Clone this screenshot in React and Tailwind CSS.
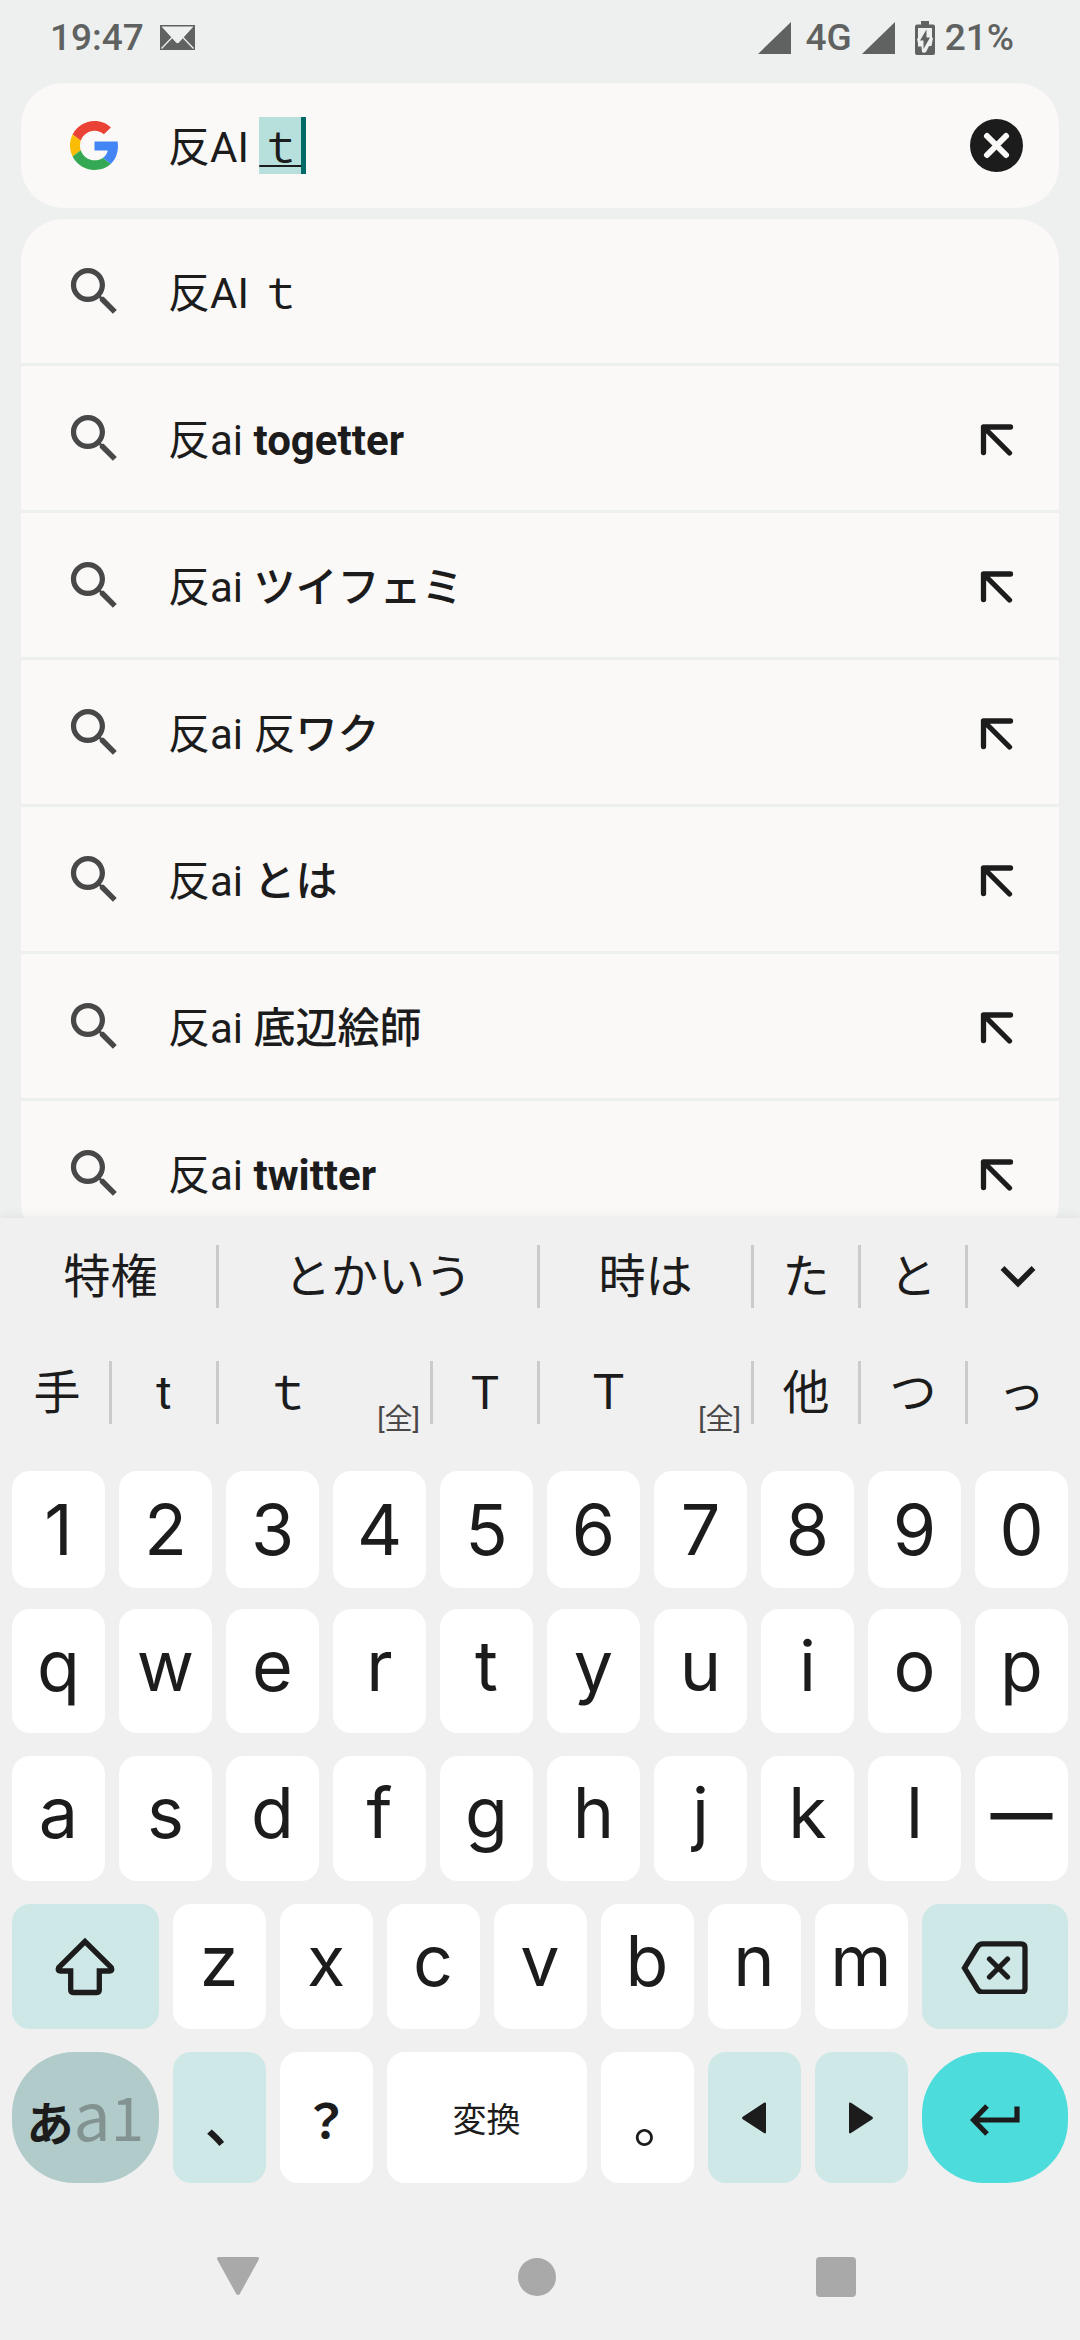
import React from 'react';

const suggestions = [
  { base: '反AI ｔ' },
  { base: '反ai ', bold: 'togetter', insert: true },
  { base: '反ai ', kana: 'ツイフェミ', insert: true },
  { base: '反ai 反', kana: 'ワク', insert: true },
  { base: '反ai ', kana: 'とは', insert: true },
  { base: '反ai ', kana: '底辺絵師', insert: true },
  { base: '反ai ', bold: 'twitter', insert: true },
];

const firstCandidates = [
  { text: '特権', span: 'col-span-2' },
  { text: 'とかいう', span: 'col-span-3' },
  { text: '時は', span: 'col-span-2' },
  { text: 'た', span: 'col-span-1' },
  { text: 'と', span: 'col-span-1' },
];

const secondCandidates = [
  { text: '手', span: 'col-span-1' },
  { text: 't', span: 'col-span-1' },
  { text: 'ｔ', span: 'col-span-2', full: true },
  { text: 'T', span: 'col-span-1' },
  { text: 'Ｔ', span: 'col-span-2', full: true },
  { text: '他', span: 'col-span-1' },
  { text: 'つ', span: 'col-span-1' },
  { text: 'っ', span: 'col-span-1', last: true },
];

const SignalIcon = () => (
  <svg className="w-[33px] h-8" viewBox="0 0 33 32" fill="currentColor">
    <path d="M33 0v32H0z" />
  </svg>
);

const MailIcon = () => (
  <svg className="w-[35px] h-[25px]" viewBox="0 0 35 25">
    <path d="M0 0h35v25H0z" fill="#606261" />
    <path d="M1.5 1.5h32L23.500 12.500 19 17.500q-1.500 1.500-3 0L11.500 12.500z" fill="#eef0ef" />
    <path d="M12 12.500 1.500 23.500M23 12.500l10.500 11" stroke="#eef0ef" strokeWidth="1.300" />
  </svg>
);

const BatteryIcon = () => (
  <svg className="w-5 h-[34px]" viewBox="0 0 20 34">
    <path
      fill="#606261"
      d="M6 0h8v3.500h4a2 2 0 0 1 2 2V32a2 2 0 0 1-2 2H2a2 2 0 0 1-2-2V5.500a2 2 0 0 1 2-2h4z"
    />
    <path fill="#eef0ef" d="M3 7h14v9.500l1 .5-1.500 8h-2.500l-3 6q-2 1.500-4 0l-.5-5.500H3V22l-1-4 1-1z" />
    <path fill="#606261" d="M11.500 8.500v8h3.500L8.500 28v-8.500H5z" />
  </svg>
);

const GoogleIcon = () => (
  <svg className="w-[49px] h-[49px]" viewBox="0 0 48 48">
    <path fill="#EA4335" d="M24 9.500c3.540 0 6.710 1.220 9.210 3.600l6.850-6.850C35.900 2.380 30.470 0 24 0 14.620 0 6.510 5.380 2.560 13.220l7.980 6.190C12.430 13.720 17.740 9.500 24 9.500z" />
    <path fill="#4285F4" d="M46.980 24.550c0-1.570-.15-3.090-.38-4.550H24v9.020h12.940c-.58 2.960-2.260 5.480-4.780 7.180l7.730 6c4.510-4.180 7.090-10.360 7.090-17.650z" />
    <path fill="#FBBC05" d="M10.530 28.590c-.48-1.450-.76-2.990-.76-4.590s.27-3.140.76-4.590l-7.980-6.190C.92 16.460 0 20.120 0 24c0 3.880.92 7.540 2.560 10.780l7.970-6.190z" />
    <path fill="#34A853" d="M24 48c6.480 0 11.930-2.130 15.890-5.810l-7.730-6c-2.150 1.450-4.920 2.300-8.160 2.300-6.260 0-11.570-4.220-13.470-9.910l-7.980 6.190C6.510 42.620 14.620 48 24 48z" />
  </svg>
);

const SearchIcon = () => (
  <svg className="w-[63px] h-[63px] shrink-0" viewBox="0 0 24 24" fill="#484848">
    <path d="M15.500 14h-.79l-.28-.27C15.410 12.590 16 11.110 16 9.500 16 5.910 13.090 3 9.500 3S3 5.910 3 9.500 5.910 16 9.500 16c1.610 0 3.090-.59 4.230-1.570l.27.28v.79l5 4.990L20.490 19l-4.990-5zm-6 0C7.010 14 5 11.990 5 9.500S7.010 5 9.500 5 14 7.010 14 9.500 11.990 14 9.500 14z" />
  </svg>
);

const InsertIcon = () => (
  <svg
    className="w-[63px] h-[63px]"
    viewBox="0 0 63 63"
    fill="none"
    stroke="#1c1c1c"
    strokeWidth="5.300"
    strokeLinecap="round"
    strokeLinejoin="round"
  >
    <path d="M45.500 20h-27V45.500M18.500 20l26 26" />
  </svg>
);

const StatusBar = () => (
  <header className="h-[75px] mb-2 pl-[50px] pr-[66px] flex items-center text-[37px] font-medium text-[#606261]">
    <span>19:47</span>
    <span className="ml-4"><MailIcon /></span>
    <div className="ml-auto flex items-center">
      <SignalIcon />
      <span className="ml-3.5 mr-2.5">4G</span>
      <SignalIcon />
      <span className="ml-5 mr-2.5"><BatteryIcon /></span>
      <span>21%</span>
    </div>
  </header>
);

const SearchBar = () => (
  <div className="h-[125px] mx-[21px] mb-[11px] pl-[49px] pr-[36px] flex items-center rounded-[42px] bg-[#faf9f8]">
    <GoogleIcon />
    <label className="ml-[49px] flex-1 flex items-center text-[42px] leading-[57px]">
      <input
        type="text"
        aria-label="検索"
        defaultValue="反AI "
        className="h-[57px] pt-1 bg-transparent outline-none [field-sizing:content]"
      />
      {/* 変換中の文字 */}
      <span className="h-[57px] pt-0.5 bg-[#b7dfdb] border-r-[5px] border-[#006a67] underline decoration-2 underline-offset-[3px] [text-decoration-skip-ink:none]">
        ｔ
      </span>
    </label>
    <button type="button" aria-label="クリア">
      <svg className="w-[53px] h-[53px]" viewBox="0 0 53 53">
        <circle cx="26.500" cy="26.500" r="26.500" fill="#1c1c1c" />
        <path d="M17 17l19 19M36 17 17 36" stroke="#faf9f8" strokeWidth="6" strokeLinecap="round" />
      </svg>
    </button>
  </div>
);

const Suggestion = ({ base, bold, kana, insert }) => (
  <li className="h-36 shrink-0 pl-[42px] pr-[31px] flex items-center bg-[#faf9f8]">
    <SearchIcon />
    <span className="ml-[42px] pt-1.5 flex-1 text-[42px] leading-[60px] whitespace-pre">
      {base}
      {bold && <b className="font-bold">{bold}</b>}
      {kana && <b className="font-medium">{kana}</b>}
    </span>
    {insert && (
      <button type="button" aria-label="入力欄に追加">
        <InsertIcon />
      </button>
    )}
  </li>
);

const Candidate = ({ text, span, full, last }) => (
  <div className={`${span} h-[116px] flex items-center`}>
    <button type="button" className="h-full flex-1 pt-0.5 leading-[60px]">{text}</button>
    {full && (
      <span className="w-[74px] pt-14 pr-2.5 text-right text-[28px] text-[#484848]">[全]</span>
    )}
    {!last && <i className="w-[3px] h-[63px] bg-[#cbcbcb]" />}
  </div>
);

const Key = ({ children, label, className = 'col-span-2 bg-white rounded-[18px]' }) => (
  <button type="button" aria-label={label} className={`${className} flex items-center justify-center`}>
    {children}
  </button>
);

const letterRow = 'h-[125px] mt-[23px] grid grid-cols-20 gap-x-[14px]';
const letterKey = 'col-span-2 bg-white rounded-[18px] pb-[11px]';
const mintKey = 'col-span-2 bg-[#cde8e6] rounded-[18px]';
const wideMintKey = 'col-span-3 bg-[#cde8e6] rounded-[18px]';

const Keyboard = () => (
  <section className="relative bg-[#f0f0f0] shadow-[0_-2px_10px_rgba(0,0,0,0.06)]">
    {/* 変換候補 */}
    <div className="px-[5px] grid grid-cols-10 text-[47px]">
      {firstCandidates.map((item) => (
        <Candidate key={item.text} {...item} />
      ))}
      <button type="button" aria-label="候補を開く" className="pr-2 flex items-center justify-center">
        <svg className="w-10 h-10" viewBox="0 0 40 40" fill="none" stroke="#1c1c1c" strokeWidth="5.500">
          <path d="M4.500 12 20 27.500 35.500 12" />
        </svg>
      </button>
      {secondCandidates.map((item) => (
        <Candidate key={item.text} {...item} />
      ))}
    </div>

    <div className="px-3 pt-[21px] font-[Inter,'Noto_Sans_CJK_JP',sans-serif] text-[70px] leading-none">
      <div className="h-[117px] grid grid-cols-20 gap-x-[14px]">
        {[...'1234567890'].map((key) => (
          <Key key={key}>{key}</Key>
        ))}
      </div>
      <div className="h-[124px] mt-[21px] grid grid-cols-20 gap-x-[14px]">
        {[...'qwertyuiop'].map((key) => (
          <Key key={key} className={letterKey}>{key}</Key>
        ))}
      </div>
      <div className={letterRow}>
        {[...'asdfghjkl'].map((key) => (
          <Key key={key} className={letterKey}>{key}</Key>
        ))}
        <Key className={letterKey}>
          <span className="text-[62px] font-semibold">—</span>
        </Key>
      </div>
      <div className={letterRow}>
        <Key label="シフト" className={wideMintKey}>
          <svg className="w-[60px] h-[60px]" viewBox="0 0 60 60" fill="none" stroke="#1c1c1c" strokeWidth="5.300">
            <path d="M30 4.500 3.700 30.500q-1.500 3.500 1.500 3.500H15.700V53q0 2.500 2.500 2.500H41.800q2.500 0 2.500-2.500V34H54.800q3 0 1.500-3.500z" />
          </svg>
        </Key>
        {[...'zxcvbnm'].map((key) => (
          <Key key={key} className={letterKey}>{key}</Key>
        ))}
        <Key label="削除" className={wideMintKey}>
          <svg
            className="w-[67px] h-[54px]"
            viewBox="0 0 67 54"
            fill="none"
            stroke="#1c1c1c"
            strokeWidth="5.300"
            strokeLinecap="round"
          >
            <path d="M3.500 28 16.500 6.800q2-3 5-3H60q4 0 4 4v40.400q0 4-4 4H21.500q-3 0-5-3z" />
            <path d="M28.500 19l18 18M46.500 19l-18 18" />
          </svg>
        </Key>
      </div>
      <div className="h-[131px] mt-[23px] grid grid-cols-20 gap-x-[14px] font-['Noto_Sans_CJK_JP',sans-serif]">
        <Key className="col-span-3 bg-[#b0cbc9] rounded-[62px] pb-3">
          <span className="flex items-baseline text-[#829391]">
            <b className="text-[47px] font-bold text-[#1c1c1c]">あ</b>
            <span className="text-[66px]">a</span>
            <span className="text-[60px]">1</span>
          </span>
        </Key>
        <Key className={mintKey}>
          <span className="text-[56px] font-medium [font-feature-settings:'palt']">、</span>
        </Key>
        <Key>
          <span className="text-[47px] font-bold">？</span>
        </Key>
        <Key className="col-span-4 bg-white rounded-[18px]">
          <span className="text-[34px]">変換</span>
        </Key>
        <Key>
          <span className="text-[56px] [font-feature-settings:'palt']">。</span>
        </Key>
        <Key label="左" className={mintKey}>
          <svg className="w-6 h-8" viewBox="0 0 24 32" fill="#1c1c1c">
            <path d="M.8 14.800 22 .8q2-1.200 2 1V30q0 2.200-2 1L.8 17.200q-1.500-1.200 0-2.400z" />
          </svg>
        </Key>
        <Key label="右" className={mintKey}>
          <svg className="w-6 h-8" viewBox="0 0 24 32" fill="#1c1c1c">
            <path d="M23.200 14.800 2 .8Q0 -.4 0 1.800V30q0 2.200 2 1l21.200-13.800q1.500-1.200 0-2.400z" />
          </svg>
        </Key>
        <Key label="改行" className="col-span-3 bg-[#4ddcdc] rounded-[62px] pt-1">
          <svg className="w-[50px] h-8" viewBox="0 0 50 32" fill="none" stroke="#1c1c1c" strokeWidth="5.200">
            <path d="M47 2.500v13.500H4M17 2 3.500 16 17 30" />
          </svg>
        </Key>
      </div>
    </div>

    <nav className="h-[126px] mt-[31px] pl-[88px] pr-[94px] grid grid-cols-3 place-items-center text-[#a9a9a9]">
      <button type="button" aria-label="戻る">
        <svg className="w-[42px] h-10" viewBox="0 0 42 40" fill="currentColor">
          <path d="M2 0h38q3 0 1.500 3L23 36.500q-2 3-4 0L.5 3Q-1 0 2 0z" />
        </svg>
      </button>
      <button type="button" aria-label="ホーム" className="w-[38px] h-[38px] rounded-full bg-current" />
      <button type="button" aria-label="履歴" className="w-10 h-10 rounded-[4px] bg-current" />
    </nav>
  </section>
);

export default function App() {
  return (
    <div className="h-screen flex flex-col overflow-hidden bg-[#eef0ef] text-[#1c1c1c] font-[Roboto,'Noto_Sans_CJK_JP',sans-serif]">
      <main className="flex-1 min-h-0 overflow-hidden">
        <StatusBar />
        <SearchBar />
        <ul className="mx-[21px] flex flex-col gap-[3px] rounded-[42px] overflow-hidden">
          {suggestions.map((item) => (
            <Suggestion key={item.base + (item.bold || item.kana)} {...item} />
          ))}
        </ul>
      </main>
      <Keyboard />
    </div>
  );
}
